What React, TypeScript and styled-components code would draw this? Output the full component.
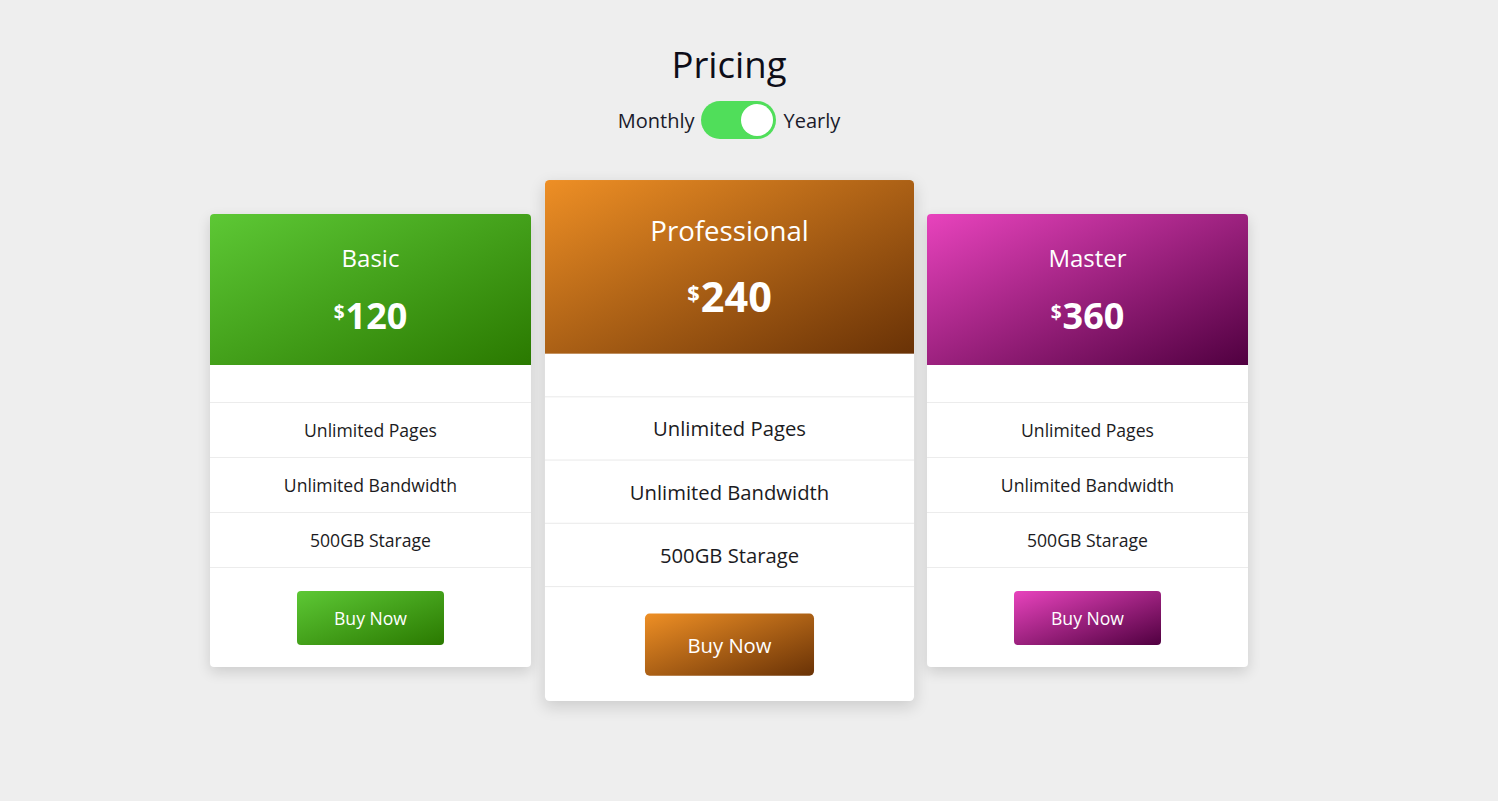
import React, { useState } from "react";
import styled, { createGlobalStyle } from "styled-components";

const GlobalStyle = createGlobalStyle`
  html, body {
    margin: 0;
    padding: 0;
    background: #eeeeee;
    font-family: "Open Sans", "Noto Sans", Arial, sans-serif;
    color: #111;
  }
  * { box-sizing: border-box; }
`;

const Page = styled.main`
  min-height: 801px;
  padding: 40px 40px 0 0;
  display: flex;
  flex-direction: column;
  align-items: center;
`;

const Title = styled.h1`
  margin: 0;
  font-size: 36.5px;
  font-weight: 400;
  line-height: 49px;
  color: #0d0d18;
`;

const ToggleRow = styled.div`
  margin-top: 12px;
  display: flex;
  align-items: center;
  gap: 7px;
  font-size: 20px;
  color: #1a1a2a;
`;

const Switch = styled.button<{ $on: boolean }>`
  width: 75px;
  height: 38px;
  border: none;
  padding: 3px;
  border-radius: 19px;
  background: ${(p) => (p.$on ? "#50de5a" : "#c8c8c8")};
  display: flex;
  justify-content: ${(p) => (p.$on ? "flex-end" : "flex-start")};
  cursor: pointer;
`;

const Knob = styled.span`
  width: 32px;
  height: 32px;
  border-radius: 50%;
  background: #fff;
`;

const Cards = styled.section`
  margin-top: 75px;
  display: flex;
  align-items: flex-start;
  gap: 37.5px;
`;

const Card = styled.article<{ $featured?: boolean }>`
  width: 321px;
  background: #fff;
  border-radius: 4px;
  overflow: hidden;
  box-shadow: 0 5px 14px rgba(0, 0, 0, 0.14);
  transform: ${(p) => (p.$featured ? "scale(1.15)" : "none")};
  text-align: center;
`;

const Header = styled.header<{ $grad: string }>`
  height: 151px;
  padding-top: 29px;
  background: ${(p) => p.$grad};
  color: #fff;
`;

const PlanName = styled.h2`
  margin: 0;
  font-size: 24px;
  font-weight: 400;
  line-height: 30px;
`;

const Price = styled.div`
  margin-top: 23px;
  font-size: 36px;
  font-weight: 700;
  line-height: 40px;
`;

const Currency = styled.span`
  font-size: 19px;
  line-height: 1;
  vertical-align: 10px;
  margin-right: 1px;
`;

const Spacer = styled.div`
  height: 38px;
  border-bottom: 1px solid #ececec;
`;

const Features = styled.ul`
  list-style: none;
  margin: 0;
  padding: 0;
`;

const Feature = styled.li`
  height: 55px;
  border-bottom: 1px solid #ececec;
  display: flex;
  align-items: center;
  justify-content: center;
  font-size: 17.6px;
  color: #1b1b22;
`;

const Footer = styled.div`
  height: 99px;
  padding-top: 23px;
  display: flex;
  justify-content: center;
  align-items: flex-start;
`;

const BuyButton = styled.button<{ $grad: string }>`
  width: 147px;
  height: 54px;
  border: none;
  border-radius: 4px;
  background: ${(p) => p.$grad};
  color: #fff;
  font-family: inherit;
  font-size: 17.6px;
  cursor: pointer;
`;

const plans = [
  {
    name: "Basic",
    price: "120",
    grad: "linear-gradient(to bottom right, #5dc835, #2a7900)",
  },
  {
    name: "Professional",
    price: "240",
    grad: "linear-gradient(to bottom right, #ee8f25, #693206)",
    featured: true,
  },
  {
    name: "Master",
    price: "360",
    grad: "linear-gradient(to bottom right, #e843bd, #500040)",
  },
];

const features = ["Unlimited Pages", "Unlimited Bandwidth", "500GB Starage"];

export default function App() {
  const [yearly, setYearly] = useState(true);
  return (
    <>
      <GlobalStyle />
      <Page>
        <Title>Pricing</Title>
        <ToggleRow>
          <span>Monthly</span>
          <Switch $on={yearly} onClick={() => setYearly(!yearly)} aria-label="toggle billing">
            <Knob />
          </Switch>
          <span>Yearly</span>
        </ToggleRow>
        <Cards>
          {plans.map((p) => (
            <Card key={p.name} $featured={p.featured}>
              <Header $grad={p.grad}>
                <PlanName>{p.name}</PlanName>
                <Price>
                  <Currency>$</Currency>
                  {p.price}
                </Price>
              </Header>
              <Spacer />
              <Features>
                {features.map((f) => (
                  <Feature key={f}>{f}</Feature>
                ))}
              </Features>
              <Footer>
                <BuyButton $grad={p.grad}>Buy Now</BuyButton>
              </Footer>
            </Card>
          ))}
        </Cards>
      </Page>
    </>
  );
}
